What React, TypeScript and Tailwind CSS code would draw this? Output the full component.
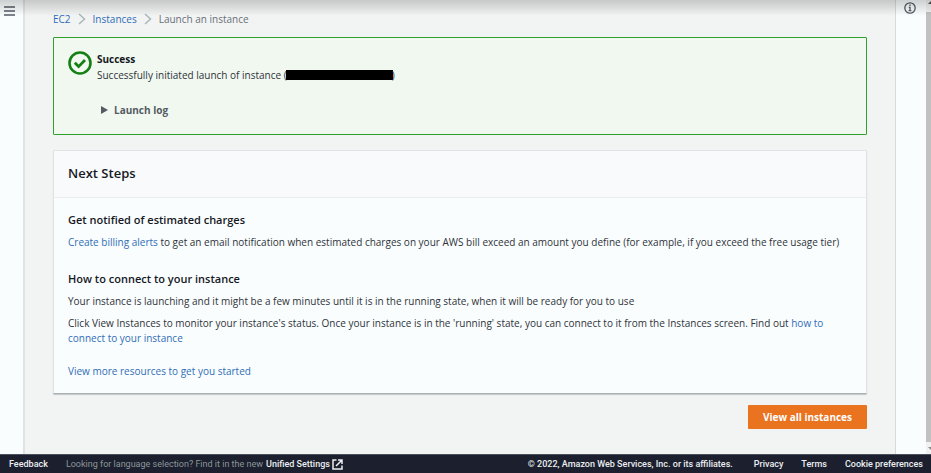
import type { ReactNode } from "react";

function TextLink({ children }: { children: ReactNode }) {
  return (
    <a href="#" className="text-[#2f6db8] hover:underline">
      {children}
    </a>
  );
}

function Chevron() {
  return (
    <svg viewBox="0 0 8 12" className="h-[12px] w-[8px] fill-none stroke-[#aab7b8]" strokeWidth="1.5" aria-hidden="true">
      <path d="M1 1l5.5 5L1 11" />
    </svg>
  );
}

function Breadcrumbs() {
  return (
    <nav aria-label="Breadcrumbs" className="flex items-center gap-[7px] text-[10px] leading-[14px]">
      <TextLink>EC2</TextLink>
      <Chevron />
      <TextLink>Instances</TextLink>
      <Chevron />
      <span className="text-[#687078]">Launch an instance</span>
    </nav>
  );
}

function SuccessAlert() {
  return (
    <section className="flex gap-[5px] rounded-[1px] border border-[#2fa02b] bg-[#f1f8f0] px-[14px] pt-[13px] pb-[16px]">
      <svg viewBox="0 0 24 24" className="h-[24px] w-[24px] shrink-0 fill-none stroke-[#148014]" aria-hidden="true">
        <circle cx="12" cy="12" r="10.5" strokeWidth="2.6" />
        <path d="M6.8 11.8l3.8 3.8 6.4-6.6" strokeWidth="2.8" />
      </svg>
      <div className="text-[10px] leading-[16px]">
        <h2 className="font-bold text-[#16191f]">Success</h2>
        <p className="flex items-center">
          Successfully initiated launch of instance (
          <span className="-mx-[1px] inline-block h-[10px] w-[107px] bg-black" />)
        </p>
        <button type="button" className="mt-[19px] ml-[4px] flex items-center gap-[6px] font-bold text-[#545b64]">
          <svg viewBox="0 0 7 8" className="h-[8px] w-[7px] fill-[#545b64]" aria-hidden="true">
            <path d="M0 0l7 4-7 4z" />
          </svg>
          Launch log
        </button>
      </div>
    </section>
  );
}

function NextSteps() {
  return (
    <section className="mt-[15px] rounded-[1px] border border-[#e1e4e5] border-b-[#a9b1b3] bg-[#fafdfe] shadow-[0_1px_1px_rgba(0,28,36,0.2)]">
      <header className="border-b border-[#eaeded] bg-[#f9fafc] px-[14px] pt-[12px] pb-[14px]">
        <h2 className="text-[13px] leading-[20px] font-semibold text-[#16191f]">Next Steps</h2>
      </header>
      <div className="px-[14px] py-[14px] text-[10px] leading-[15px]">
        <h3 className="text-[11px] leading-[16px] font-semibold text-[#16191f]">Get notified of estimated charges</h3>
        <p className="mt-[7px]">
          <TextLink>Create billing alerts</TextLink> to get an email notification when estimated charges on your AWS bill
          exceed an amount you define (for example, if you exceed the free usage tier)
        </p>
        <h3 className="mt-[21px] text-[11px] leading-[16px] font-semibold text-[#16191f]">How to connect to your instance</h3>
        <p className="mt-[7px]">
          Your instance is launching and it might be a few minutes until it is in the running state, when it will be
          ready for you to use
        </p>
        <p className="mt-[7px]">
          Click View Instances to monitor your instance's status. Once your instance is in the 'running' state, you can
          connect to it from the Instances screen. Find out <TextLink>how to connect to your instance</TextLink>
        </p>
        <p className="mt-[18px]">
          <TextLink>View more resources to get you started</TextLink>
        </p>
      </div>
    </section>
  );
}

function Footer() {
  return (
    <footer className="flex items-center justify-between border-t border-[#4a505c] bg-[#1b1f2e] pr-[8px] pl-[9px] font-[Roboto,sans-serif] text-[9px] leading-[18px] text-[#eceff1]">
      <div className="flex items-center gap-[18px]">
        <a href="#" className="font-medium">Feedback</a>
        <p className="flex items-center gap-[3px] text-[#8d9899]">
          Looking for language selection? Find it in the new
          <a href="#" className="flex items-center gap-[2px] font-medium text-[#eceff1]">
            Unified Settings
            <svg viewBox="0 0 11 11" className="h-[11px] w-[11px] fill-none stroke-current" strokeWidth="1.5" aria-hidden="true">
              <path d="M4.5 1H1v9h9V6.5M6 1h4v4M10 1L4 7" />
            </svg>
          </a>
        </p>
      </div>
      <div className="flex items-center font-medium">
        <span className="mr-[21px]">© 2022, Amazon Web Services, Inc. or its affiliates.</span>
        <a href="#" className="mr-[18px]">Privacy</a>
        <a href="#" className="mr-[18px]">Terms</a>
        <a href="#">Cookie preferences</a>
      </div>
    </footer>
  );
}

export default function App() {
  return (
    <div className="relative flex h-screen flex-col overflow-hidden bg-[#f2f3f3] font-['Open_Sans','Noto_Sans',sans-serif] text-[#2f3339]">
      <div className="flex min-h-0 flex-1">
        <aside className="w-[25px] shrink-0 border-r-2 border-[#dfe3e3] bg-[#fafdfe] pt-[6px] pl-[4px]">
          <button type="button" aria-label="Open navigation" className="block">
            <svg viewBox="0 0 11 10" className="h-[10px] w-[11px] stroke-[#545b64]" strokeWidth="1.5" aria-hidden="true">
              <path d="M0 1h11M0 5h11M0 9h11" />
            </svg>
          </button>
        </aside>
        <main className="min-w-0 flex-1 px-[28px] pt-[12px]">
          <Breadcrumbs />
          <div className="mt-[11px]">
            <SuccessAlert />
            <NextSteps />
          </div>
          <div className="mt-[11px] flex justify-end">
            <button type="button" className="rounded-[1px] bg-[#e9731f] px-[15px] text-[10px] leading-[24px] font-bold text-white">
              View all instances
            </button>
          </div>
        </main>
        <aside className="w-[31px] shrink-0 border-l border-[#d5dbdb] bg-[#fafdfe] pt-[2px] pl-[8px]">
          <button type="button" aria-label="Open info panel" className="block">
            <svg viewBox="0 0 12 12" className="h-[12px] w-[12px] fill-none stroke-[#545b64]" strokeWidth="1.3" aria-hidden="true">
              <circle cx="6" cy="6" r="5.2" />
              <path d="M6 2.6v1.4M4.8 5.4H6v3.2M4.6 8.7h2.8" />
            </svg>
          </button>
        </aside>
        <div className="flex w-[5px] shrink-0 flex-col bg-[#f1f1f1]" aria-hidden="true">
          <svg viewBox="0 0 5 12" className="h-[12px] w-[5px] fill-[#505050]">
            <path d="M2 4l3-3v3z" />
          </svg>
          <div className="flex-1 bg-[#c1c1c1]" />
          <svg viewBox="0 0 5 12" className="h-[12px] w-[5px] fill-[#8a8a8a]">
            <path d="M2 5h3v3z" />
          </svg>
        </div>
      </div>
      <Footer />
      <div className="pointer-events-none absolute inset-x-0 top-0 h-[16px] bg-linear-to-b from-black/18 to-transparent" />
    </div>
  );
}
